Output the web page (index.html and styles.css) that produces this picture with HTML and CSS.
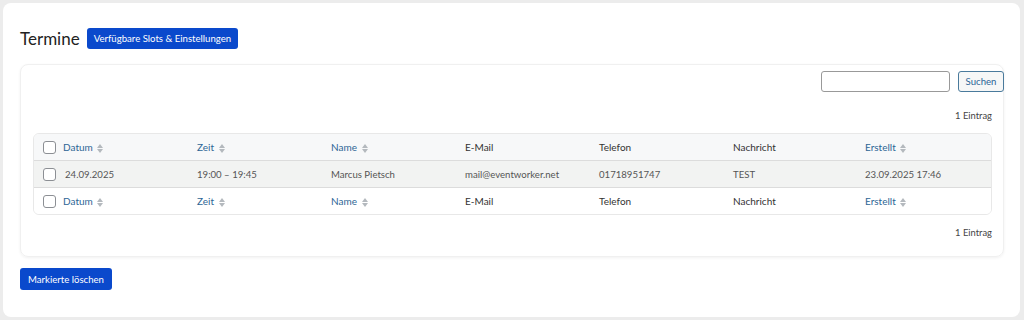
FILE: index.html
```html
<!DOCTYPE html>
<html lang="de">
<head>
  <meta charset="UTF-8">
  <title>Termine</title>
  <link rel="stylesheet" href="styles.css">
</head>
<body>
  <div class="card">
    <div class="head">
      <h1>Termine</h1>
      <button class="btn">Verfügbare Slots &amp; Einstellungen</button>
    </div>

    <div class="panel">
      <div class="toolbar">
        <input type="text" class="search">
        <button class="btn-outline">Suchen</button>
      </div>
      <div class="count">1 Eintrag</div>

      <div class="table">
        <div class="row row-head">
          <span class="cell check"><i class="box"></i></span>
          <span class="cell sort">Datum <i class="arrows"></i></span>
          <span class="cell sort">Zeit <i class="arrows"></i></span>
          <span class="cell sort">Name <i class="arrows"></i></span>
          <span class="cell">E-Mail</span>
          <span class="cell">Telefon</span>
          <span class="cell">Nachricht</span>
          <span class="cell sort">Erstellt <i class="arrows"></i></span>
        </div>
        <div class="row row-data">
          <span class="cell check"><i class="box"></i></span>
          <span class="cell first">24.09.2025</span>
          <span class="cell">19:00 – 19:45</span>
          <span class="cell">Marcus Pietsch</span>
          <span class="cell">mail@eventworker.net</span>
          <span class="cell">01718951747</span>
          <span class="cell">TEST</span>
          <span class="cell">23.09.2025 17:46</span>
        </div>
        <div class="row row-foot">
          <span class="cell check"><i class="box"></i></span>
          <span class="cell sort">Datum <i class="arrows"></i></span>
          <span class="cell sort">Zeit <i class="arrows"></i></span>
          <span class="cell sort">Name <i class="arrows"></i></span>
          <span class="cell">E-Mail</span>
          <span class="cell">Telefon</span>
          <span class="cell">Nachricht</span>
          <span class="cell sort">Erstellt <i class="arrows"></i></span>
        </div>
      </div>

      <div class="count count-bottom">1 Eintrag</div>
    </div>

    <button class="btn btn-delete">Markierte löschen</button>
  </div>
</body>
</html>
```

FILE: styles.css
```css
/* page frame */
body {
  margin: 0;
  padding: 3px 4px 3px 3px;
  background-color: #ececec;
  font-family: Lato, "Noto Sans", Arial, sans-serif;
  color: #333;
}

.card {
  background-color: #fff;
  border-radius: 8px;
  height: 314px;
  box-sizing: border-box;
  padding: 25px 16px 0 17px;
}

.head {
  display: flex;
  align-items: center;
  gap: 7px;
  height: 21px;
}

h1 {
  margin: 0;
  font-size: 17px;
  line-height: 21px;
  font-weight: 400;
  color: #222;
}

.btn {
  background-color: #0a49cc;
  color: #fff;
  border: none;
  border-radius: 3px;
  font-family: inherit;
  font-size: 9.6px;
  height: 21px;
  padding: 0 7px;
}

/* inner panel */
.panel {
  margin-top: 15px;
  height: 193px;
  box-sizing: border-box;
  border: 1px solid #f0f0f0;
  border-radius: 8px;
  box-shadow: 0 1px 3px rgba(0, 0, 0, 0.06);
  padding: 6px 11px 0 12px;
}

.toolbar {
  display: flex;
  justify-content: flex-end;
  gap: 8px;
  margin-right: -12px;
}

.search {
  width: 129px;
  height: 21px;
  box-sizing: border-box;
  border: 1px solid #999;
  border-radius: 3px;
  margin: 0;
}

.btn-outline {
  height: 21px;
  width: 46px;
  padding: 0;
  background-color: #f6f7f7;
  border: 1px solid #4a7a9c;
  border-radius: 3px;
  color: #2a6496;
  font-family: inherit;
  font-size: 9.6px;
}

.count {
  text-align: right;
  font-size: 9.4px;
  color: #444;
  margin-top: 18px;
  height: 17px;
}

.count-bottom {
  margin-top: 12px;
}

.table {
  margin-top: 6px;
  border: 1px solid #e8e8e8;
  border-radius: 6px;
  overflow: hidden;
}

.row {
  display: grid;
  grid-template-columns: 29px repeat(5, 134px) 132px 1fr;
  align-items: center;
  height: 26px;
  font-size: 10px;
}

.row-head {
  background-color: #f7f8f9;
  border-bottom: 1px solid #dcdcdc;
}

.row-data {
  background-color: #f2f3f2;
  color: #555;
  font-size: 9.6px;
  border-bottom: 1px solid #dcdcdc;
}

.row-foot {
  background-color: #fff;
}

.cell {
  white-space: nowrap;
}

.row-data .first {
  padding-left: 2px;
}

.check {
  display: flex;
  justify-content: center;
  padding-left: 2px;
}

.box {
  width: 11px;
  height: 11px;
  border: 1px solid #8c8f94;
  border-radius: 3px;
  background: #fff;
}

.sort {
  color: #2c6695;
}

.arrows {
  display: inline-block;
  vertical-align: middle;
  width: 6px;
  height: 9px;
  margin-left: 2px;
  position: relative;
}

.arrows::before,
.arrows::after {
  content: "";
  position: absolute;
  left: 0;
  border-left: 3px solid transparent;
  border-right: 3px solid transparent;
}

.arrows::before {
  top: 0;
  border-bottom: 4px solid #b4b9be;
}

.arrows::after {
  bottom: 0;
  border-top: 4px solid #b4b9be;
}

.btn-delete {
  margin-top: 11px;
  height: 22px;
  padding: 0 8px;
}
```
